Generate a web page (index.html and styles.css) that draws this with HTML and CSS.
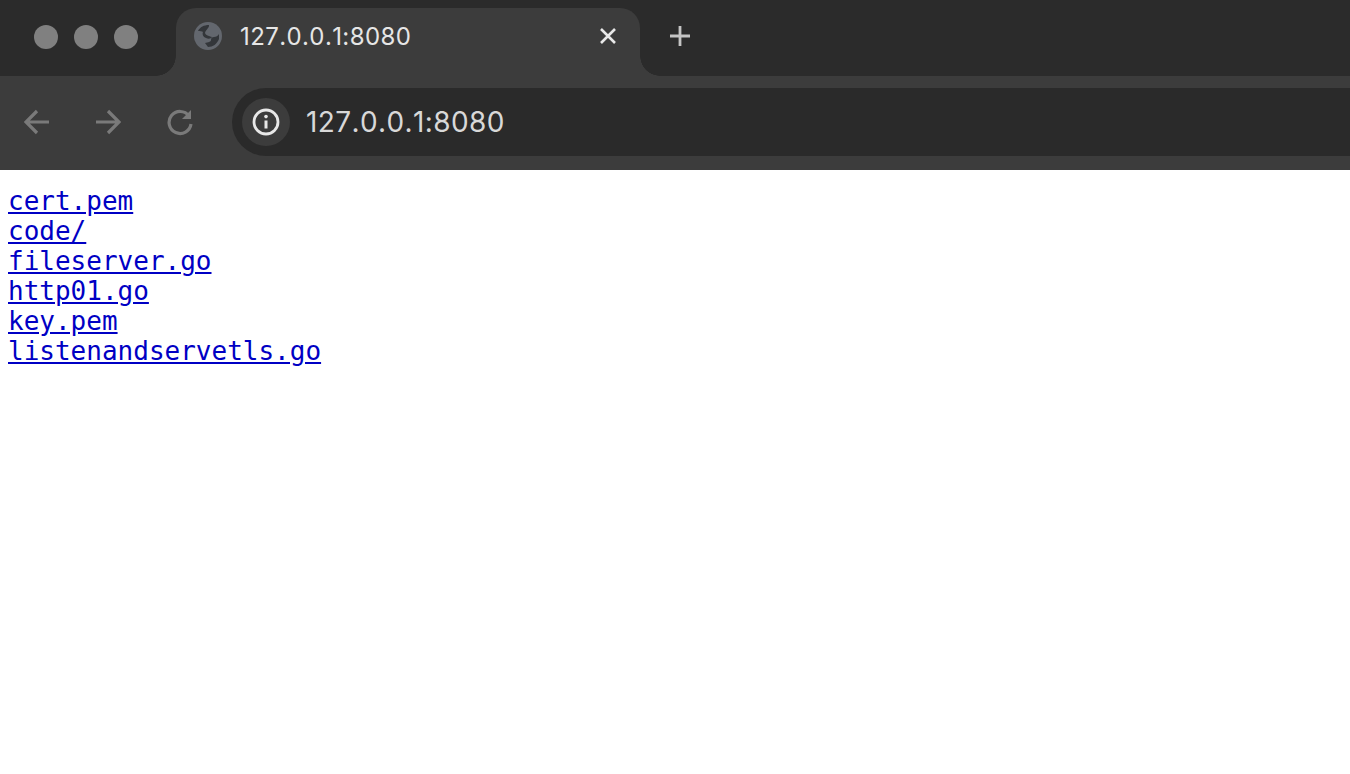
FILE: index.html
```html
<!DOCTYPE html>
<html lang="en">
  <head>
    <meta charset="UTF-8" />
    <meta name="viewport" content="width=device-width, initial-scale=1.0" />
    <title>127.0.0.1:8080</title>
    <link rel="stylesheet" href="styles.css">
  </head>
  <body>
    <div class="titlebar">
      <div class="traffic-lights">
        <span class="light"></span>
        <span class="light"></span>
        <span class="light"></span>
      </div>
      <div class="tab">
        <svg class="favicon" width="28" height="28" viewBox="0 0 28 28">
          <circle cx="14" cy="14" r="14" fill="#63676e" />
          <path d="M15 3C10 3 6 5 4 9c2 0 4 0 5 1-1 2 0 5 3 6 2 1 5 1 6-1-2-1-6-1-7-4 0-2 2-3 3-5 1-1 1-2 1-3z" fill="#33363a" />
          <path d="M25 12c-1 2-3 3-5 3-2 0-3 1-3 3 0 2-3 2-6 3l3 4c5 0 9-3 11-8 0-2 0-4 0-5z" fill="#33363a" />
        </svg>
        <span class="tab-title">127.0.0.1:8080</span>
        <svg class="tab-close" width="18" height="18" viewBox="0 0 18 18">
          <path d="M2 2l14 14M16 2L2 16" stroke="#e8e8e8" stroke-width="2.6" fill="none" />
        </svg>
      </div>
      <svg class="new-tab" width="22" height="22" viewBox="0 0 22 22">
        <path d="M11 1v20M1 11h20" stroke="#c4c4c4" stroke-width="2.8" fill="none" />
      </svg>
    </div>

    <div class="toolbar">
      <div class="nav-buttons">
        <svg width="26" height="26" viewBox="0 0 26 26">
          <path d="M25 13H3M13 2L2 13l11 11" stroke="#7a7a7a" stroke-width="3.2" fill="none" />
        </svg>
        <svg width="26" height="26" viewBox="0 0 26 26">
          <path d="M1 13h22M13 2l11 11-11 11" stroke="#7a7a7a" stroke-width="3.2" fill="none" />
        </svg>
        <svg width="28" height="28" viewBox="0 0 28 28">
          <path d="M23 8a11 11 0 1 0 2 8" stroke="#7a7a7a" stroke-width="3.2" fill="none" />
          <path d="M25 2v9h-9z" fill="#7a7a7a" />
        </svg>
      </div>
      <div class="address-bar">
        <span class="site-info">
          <svg width="28" height="28" viewBox="0 0 28 28">
            <circle cx="14" cy="14" r="12" stroke="#e8e8e8" stroke-width="2.8" fill="none" />
            <circle cx="14" cy="8.6" r="1.8" fill="#e8e8e8" />
            <path d="M14 12.5v8" stroke="#e8e8e8" stroke-width="3" />
          </svg>
        </span>
        <span class="url">127.0.0.1:8080</span>
      </div>
    </div>

    <main class="listing">
      <pre class="files"><a href="cert.pem">cert.pem</a>
<a href="code/">code/</a>
<a href="fileserver.go">fileserver.go</a>
<a href="http01.go">http01.go</a>
<a href="key.pem">key.pem</a>
<a href="listenandservetls.go">listenandservetls.go</a></pre>
    </main>
  </body>
</html>
```

FILE: styles.css
```css
body {
  margin: 0;
  background-color: #fff;
  font-family: Inter, "Liberation Sans", sans-serif;
}
.titlebar {
  display: flex;
  align-items: flex-start;
  height: 76px;
  background-color: #2b2b2b;
}
.traffic-lights {
  display: flex;
  gap: 16px;
  width: 142px;
  padding: 25px 0 0 34px;
}
.light {
  width: 24px;
  height: 24px;
  border-radius: 50%;
  background-color: #808080;
}
.tab {
  position: relative;
  display: flex;
  align-items: center;
  width: 464px;
  height: 68px;
  margin-top: 8px;
  padding: 0 23px 12px 18px;
  box-sizing: border-box;
  background-color: #3c3c3c;
  border-radius: 20px 20px 0 0;
}
.tab::before,
.tab::after {
  content: "";
  position: absolute;
  bottom: 0;
  width: 20px;
  height: 20px;
}
.tab::before {
  left: -20px;
  background: radial-gradient(circle at 0 0, #2b2b2b 19.5px, #3c3c3c 20px);
}
.tab::after {
  right: -20px;
  background: radial-gradient(circle at 100% 0, #2b2b2b 19.5px, #3c3c3c 20px);
}
.tab-title {
  flex: 1;
  margin-left: 18px;
  font-size: 24px;
  font-kerning: none;
  letter-spacing: 0.4px;
  color: #e6e6e6;
}
.new-tab {
  margin: 25px 0 0 29px;
}
.toolbar {
  display: flex;
  align-items: center;
  height: 94px;
  padding-bottom: 2px;
  box-sizing: border-box;
  background-color: #3c3c3c;
}
.nav-buttons {
  display: flex;
  align-items: center;
  gap: 45px;
  width: 232px;
  padding-left: 24px;
  box-sizing: border-box;
}
.address-bar {
  display: flex;
  align-items: center;
  flex: 1;
  height: 68px;
  padding-left: 10px;
  background-color: #2a2a2a;
  border-radius: 34px 0 0 34px;
}
.site-info {
  display: flex;
  align-items: center;
  justify-content: center;
  width: 48px;
  height: 48px;
  border-radius: 50%;
  background-color: #3c3c3c;
}
.url {
  margin-left: 16px;
  font-size: 28px;
  font-kerning: none;
  letter-spacing: 0.4px;
  color: #d8d8d8;
}
.listing {
  padding: 16px 8px;
}
.files {
  margin: 0;
  font-family: "DejaVu Sans Mono", monospace;
  font-size: 26px;
  line-height: 30px;
}
.files a {
  color: #0000c4;
}
```
